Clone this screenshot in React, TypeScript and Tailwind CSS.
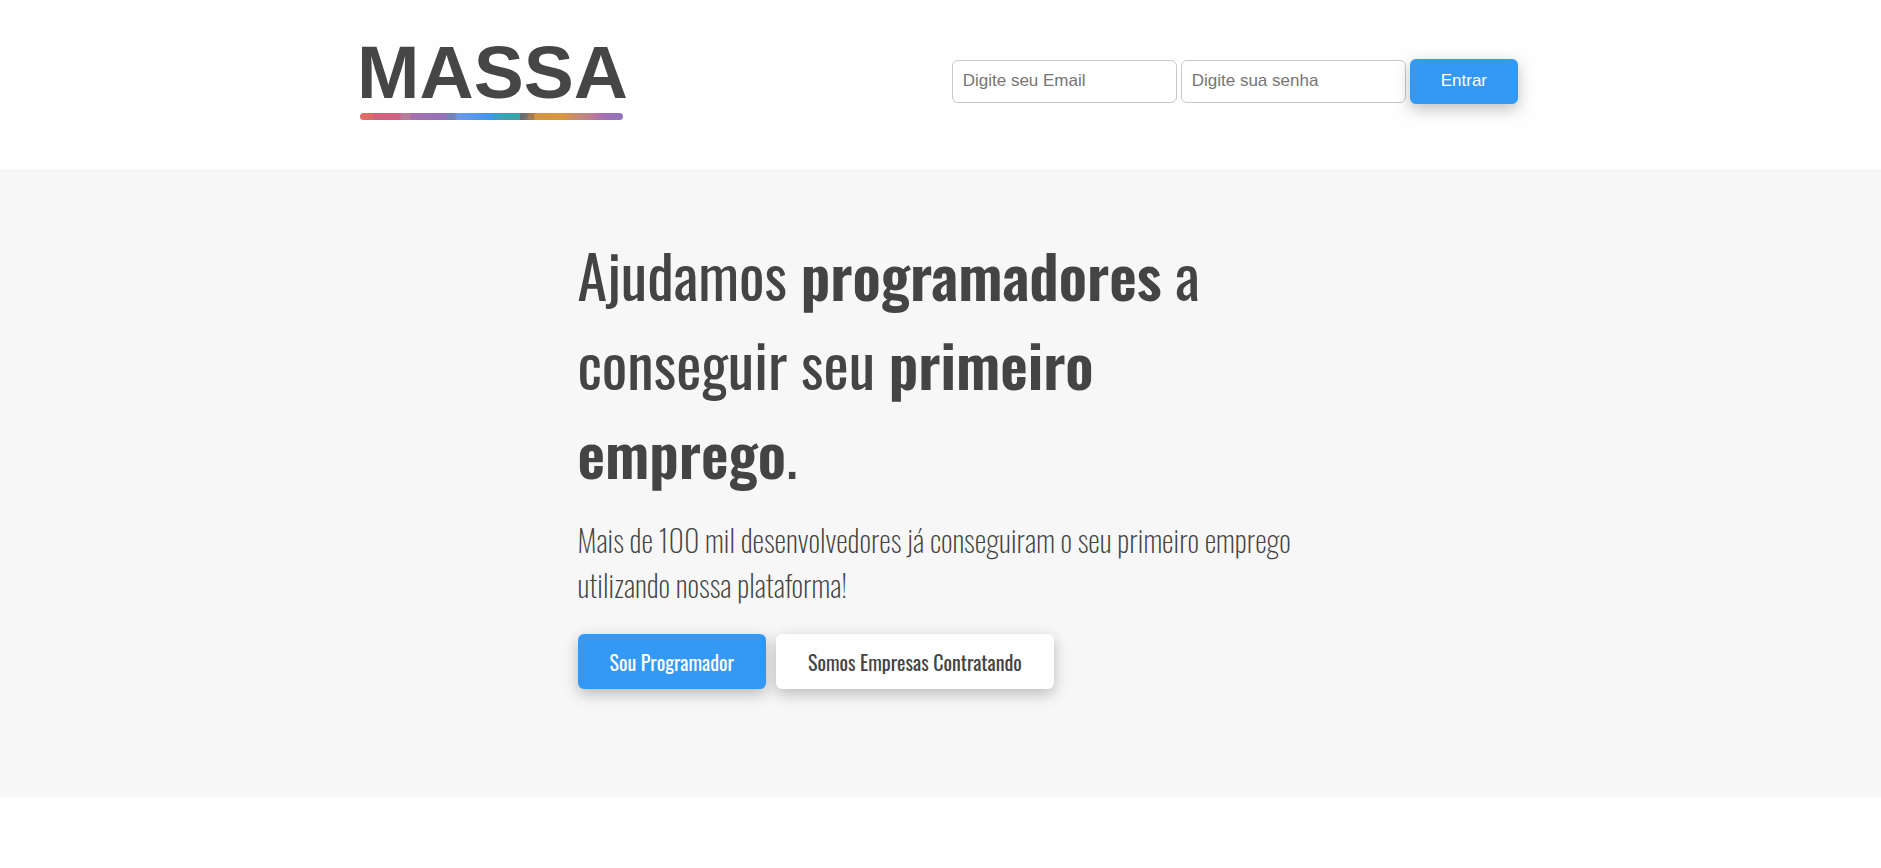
const field =
  "h-[43px] w-[225px] rounded-md border border-[#c8c8c8] bg-white px-[10px] pb-[1px] text-[17px] text-[#444] placeholder:text-[#757575]";

const raised = "cursor-pointer rounded-md shadow-[0_5px_15px_rgba(0,0,0,0.25)]";

function Logo() {
  return (
    <svg
      className="block h-[80px] w-[264px] shrink-0 overflow-visible"
      viewBox="0 0 264 80"
      role="img"
      aria-label="MASSA"
    >
      <defs>
        <linearGradient id="bar" x1="0" x2="1" y1="0" y2="0">
          <stop offset="0.05" stopColor="#db6c68" />
          <stop offset="0.05" stopColor="#d4607a" />
          <stop offset="0.15" stopColor="#cf6285" />
          <stop offset="0.16" stopColor="#b97b9b" />
          <stop offset="0.19" stopColor="#b97b9b" />
          <stop offset="0.19" stopColor="#a870af" />
          <stop offset="0.33" stopColor="#9272b8" />
          <stop offset="0.33" stopColor="#7480b8" />
          <stop offset="0.36" stopColor="#7480b8" />
          <stop offset="0.37" stopColor="#6b9ae6" />
          <stop offset="0.48" stopColor="#4a96f2" />
          <stop offset="0.5" stopColor="#3d98f0" />
          <stop offset="0.51" stopColor="#3b9dcc" />
          <stop offset="0.55" stopColor="#39a4b0" />
          <stop offset="0.61" stopColor="#39a4a8" />
          <stop offset="0.61" stopColor="#686b6b" />
          <stop offset="0.635" stopColor="#737373" />
          <stop offset="0.64" stopColor="#9c7a58" />
          <stop offset="0.66" stopColor="#a87c4e" />
          <stop offset="0.665" stopColor="#d29440" />
          <stop offset="0.77" stopColor="#d89642" />
          <stop offset="0.8" stopColor="#d28e5c" />
          <stop offset="0.84" stopColor="#c28a7c" />
          <stop offset="0.89" stopColor="#b87a98" />
          <stop offset="0.92" stopColor="#a870b0" />
          <stop offset="0.96" stopColor="#9a72b8" />
          <stop offset="1" stopColor="#9274bc" />
        </linearGradient>
      </defs>
      <text
        x="-3"
        y="57"
        fill="#464646"
        fontSize="75"
        fontWeight="700"
        className="font-['Liberation_Sans',Arial,sans-serif]"
      >
        MASSA
      </text>
      <rect y="72" width="263" height="7" rx="3.5" fill="url(#bar)" />
    </svg>
  );
}

export default function App() {
  return (
    <div className="min-h-screen bg-[#fefefe] font-['Oswald',sans-serif] text-[#444]">
      <header className="mx-auto flex max-w-[1161px] flex-wrap items-center justify-between gap-4 pt-[41px] pb-12 font-['Liberation_Sans',Arial,sans-serif]">
        <a href="#">
          <Logo />
        </a>
        <form className="flex flex-wrap items-center gap-1 pr-[3px]">
          <input type="email" aria-label="Email" placeholder="Digite seu Email" className={field} />
          <input type="password" aria-label="Senha" placeholder="Digite sua senha" className={field} />
          <button
            type="button"
            className={`h-[45px] bg-[#3498f5] px-[31px] pb-[1px] text-[17px] text-white ${raised}`}
          >
            Entrar
          </button>
        </form>
      </header>
      <main className="bg-[#f7f7f7] pt-[60px] pb-[108px]">
        <div className="mx-auto max-w-[726px]">
          <h1 className="text-[60px] leading-[89px]">
            Ajudamos <strong className="font-semibold">programadores</strong> a conseguir seu{" "}
            <strong className="font-semibold">primeiro emprego</strong>.
          </h1>
          <p className="mt-[21px] text-[30px] leading-[45px] font-extralight">
            Mais de 100 mil desenvolvedores já conseguiram o seu primeiro emprego utilizando nossa
            plataforma!
          </p>
          <div className="mt-[27px] flex flex-wrap gap-[10px] text-[20px]">
            <button
              type="button"
              className={`h-[55px] bg-[#3498f5] px-8 text-white ${raised}`}
            >
              Sou Programador
            </button>
            <button type="button" className={`h-[55px] bg-[#fefefe] px-8 ${raised}`}>
              Somos Empresas Contratando
            </button>
          </div>
        </div>
      </main>
    </div>
  );
}
